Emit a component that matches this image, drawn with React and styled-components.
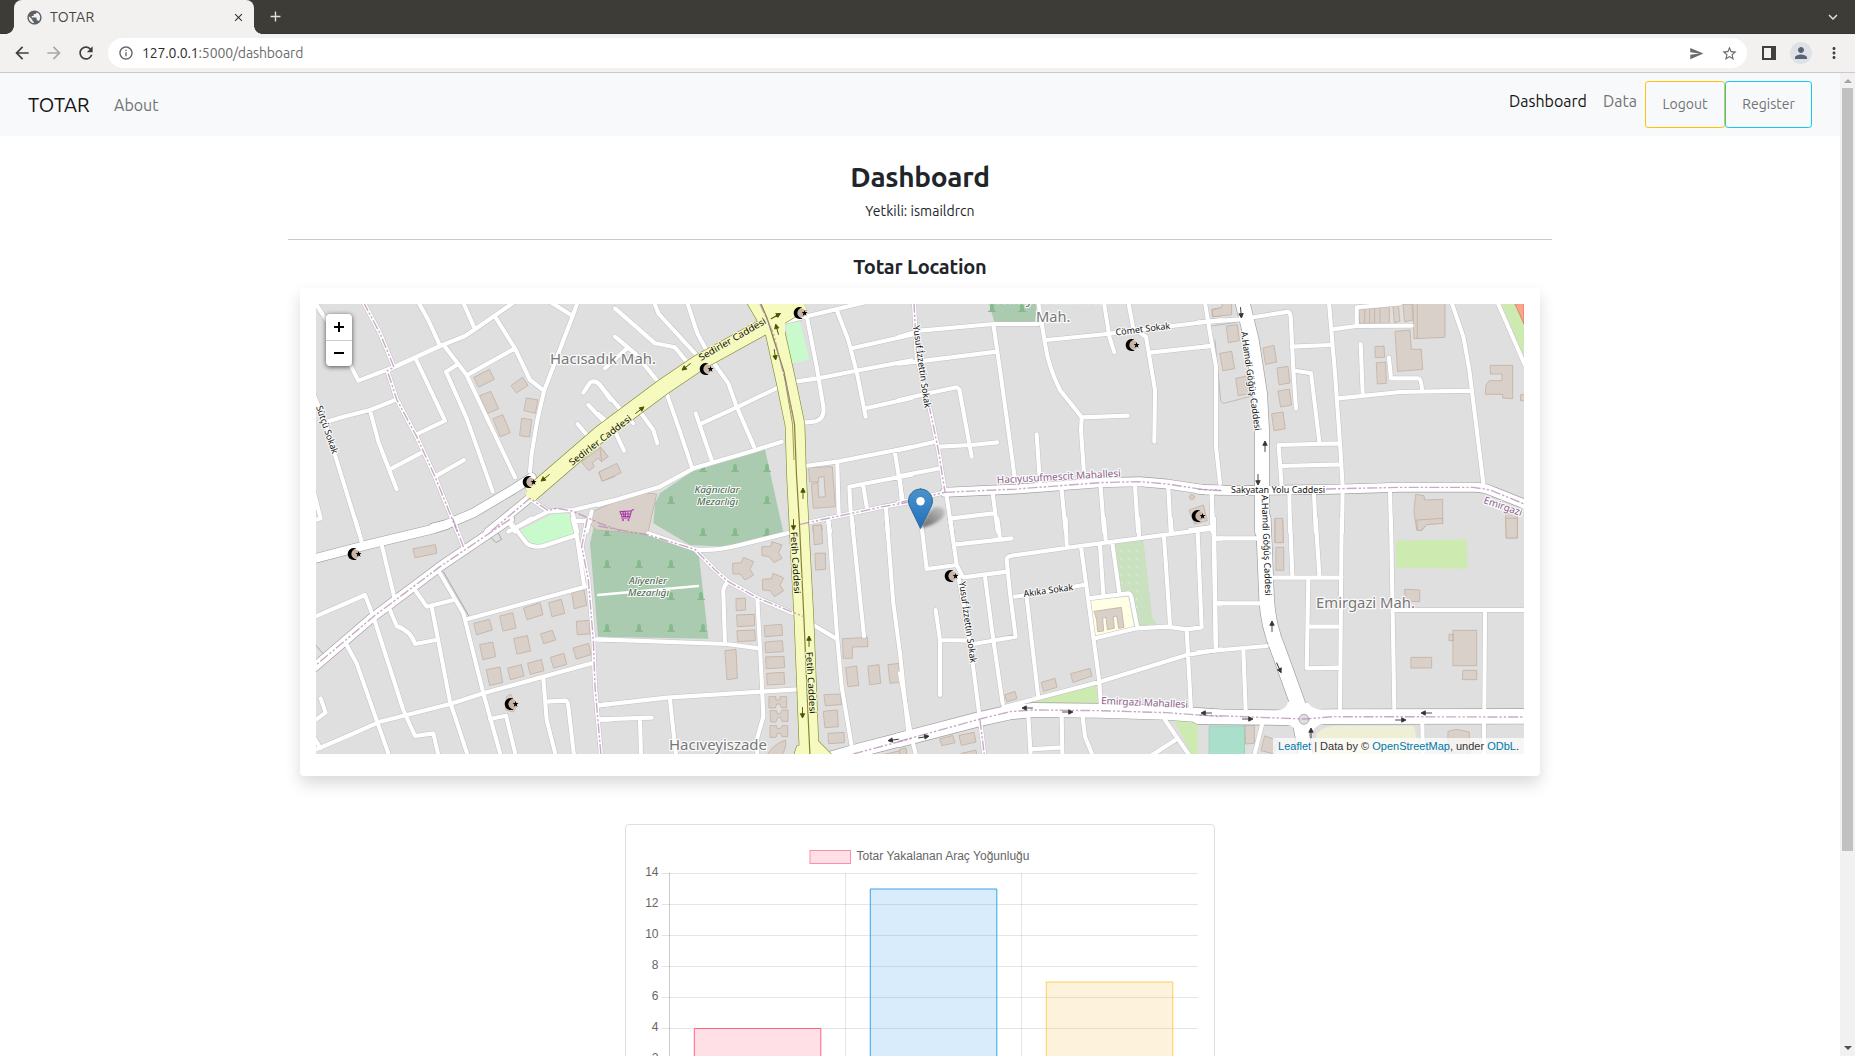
import React from "react";
import styled, { createGlobalStyle } from "styled-components";
import {
  MdArrowBack, MdArrowForward, MdRefresh, MdInfoOutline, MdSend, MdStarBorder,
  MdClose, MdAdd, MdExpandMore, MdMoreVert, MdPerson, MdPublic,
} from "react-icons/md";

const UI = `Ubuntu, "Noto Sans", "Open Sans", sans-serif`;

const Global = createGlobalStyle`
  * { box-sizing: border-box; }
  body { margin: 0; background: #fff; overflow: hidden; font-family: ${UI}; color: #212529; }
  h1, h2, p, hr { margin: 0; }
  a { text-decoration: none; color: inherit; }
`;

/* ---------- browser window ---------- */
const Window = styled.div`height: 100vh; display: flex; flex-direction: column; overflow: hidden;`;
const TabStrip = styled.div`
  height: 34px; flex: none; background: #3e3c37; display: flex; align-items: stretch;
  padding: 0 13px 0 14px; border-bottom: 1px solid #37353a;
`;
const Tab = styled.div`
  width: 240px; height: 34px; background: #f2f1f0; border-radius: 8px 8px 0 0; position: relative;
  display: flex; align-items: center; padding: 0 9px 0 12px; font-size: 14px; color: #454545;
  &::before, &::after {
    content: ""; position: absolute; bottom: 0; width: 8px; height: 8px;
  }
  &::before { left: -8px; background: radial-gradient(circle at 0 0, transparent 7.5px, #f2f1f0 8px); }
  &::after { right: -8px; background: radial-gradient(circle at 100% 0, transparent 7.5px, #f2f1f0 8px); }
  svg { flex: none; }
`;
const TabTitle = styled.span`margin-left: 7px; flex: 1; letter-spacing: 0.3px; line-height: 18px; padding-bottom: 1px;`;
const StripButton = styled.span`
  display: flex; align-items: center; color: #e4dfd4; margin-left: ${(p) => (p.$end ? "auto" : "13px")};
`;
const Toolbar = styled.div`
  height: 39px; flex: none; background: #f2f1f0; border-bottom: 1px solid #cbcaca; display: flex;
  align-items: center; padding: 0 12px 0 12px; color: #3f3f3f;
`;
const NavIcon = styled.span`
  width: 20px; height: 20px; margin-right: 12px; display: flex; align-items: center; justify-content: center;
  color: ${(p) => (p.$off ? "#a9a8a7" : "#3f3f3f")};
`;
const Address = styled.div`
  flex: 1; height: 30px; border-radius: 15px; background: #fff; display: flex; align-items: center;
  padding: 0 9px 0 10px; font-size: 14px; color: #6c6c6c; letter-spacing: -0.13px;
  b { font-weight: 400; color: #2c2c2c; }
  svg { flex: none; }
`;
const Url = styled.span`margin-left: 8px; flex: 1; padding-bottom: 1px;`;
const StarSlot = styled.span`display: flex; margin-left: 17px;`;
const Trailing = styled.div`display: flex; align-items: center; margin-left: 14px; gap: 13px;`;
const Avatar = styled.span`
  width: 22px; height: 22px; border-radius: 50%; background: #dee1e6; color: #5a6275; display: flex;
  align-items: center; justify-content: center;
`;

/* ---------- page ---------- */
const Viewport = styled.div`flex: 1; min-height: 0; display: flex;`;
const Page = styled.div`flex: 1; min-width: 0; overflow: hidden;`;
const ScrollTrack = styled.div`
  width: 15px; background: #f1f1f1; display: flex; flex-direction: column; align-items: center;
  padding: 6px 0 6px;
`;
const ScrollArrow = styled.span`
  border: 4px solid transparent; border-top-width: 0;
  border-bottom: 4px solid ${(p) => (p.$down ? "#505050" : "#a3a3a3")};
  transform: rotate(${(p) => (p.$down ? 180 : 0)}deg); margin-top: ${(p) => (p.$down ? "auto" : 0)};
`;
const ScrollThumb = styled.div`width: 11px; height: 763px; background: #c1c1c1; margin-top: 5px;`;

const Navbar = styled.nav`
  height: 63px; background: #f8f9fb; display: flex; align-items: center; padding: 0 28px;
`;
const Brand = styled.a`font-size: 20px; color: #151515; width: 86px;`;
const NavLink = styled.a`
  font-size: 16px; line-height: 24px; color: ${(p) => (p.$active ? "#151515" : "#727374")};
`;
const NavRight = styled.div`margin-left: auto; height: 47px; display: flex; align-items: flex-start;`;
const LinkSlot = styled.span`width: ${(p) => p.$w}px; padding-top: 8px; margin-left: ${(p) => p.$pull || 0}px;`;
const NavButton = styled.button`
  height: 47px; width: ${(p) => p.$w}px; border: 1px solid ${(p) => p.$color}; border-radius: 3.2px;
  background: transparent; font: 400 14px ${UI}; color: #727374; padding: 0 0 2px;
`;
const Content = styled.main`
  width: 1264px; margin: 0 auto; display: flex; flex-direction: column; align-items: center;
`;
const Title = styled.h1`
  margin-top: 24px; font-size: 28px; line-height: 34px; font-weight: 600; letter-spacing: -0.3px;
`;
const Subtitle = styled.p`margin-top: 7px; font-size: 14px; line-height: 21px; letter-spacing: 0.03px;`;
const Rule = styled.hr`width: 100%; height: 1px; border: 0; background: #c8c9ca; margin-top: 17px;`;
const Section = styled.h2`
  margin-top: 15px; font-size: 20px; line-height: 24px; font-weight: 600; letter-spacing: -0.2px;
`;
const MapCard = styled.section`
  margin-top: 9px; width: 1240px; height: 488px; padding: 16px; background: #fff; border-radius: 4px;
  box-shadow: 0 8px 16px rgba(0, 0, 0, 0.15); flex: none;
`;
const MapFrame = styled.div`position: relative; width: 1208px; height: 450px; overflow: hidden;`;
const MapSvg = styled.svg`display: block; font-family: "Noto Sans", sans-serif;`;
const Zoom = styled.div`
  position: absolute; left: 10px; top: 10px; width: 26px; border-radius: 4px; background: #fff;
  box-shadow: 0 1px 5px rgba(0, 0, 0, 0.65);
`;
const ZoomButton = styled.a`
  display: flex; height: 26px; align-items: center; justify-content: center; color: #000;
  & + & { border-top: 1px solid #ccc; padding-bottom: 2px; }
`;
const Attribution = styled.div`
  position: absolute; right: 0; bottom: 0; padding: 0 5px; height: 16px; background: rgba(255, 255, 255, 0.7);
  font: 11px/16px "Liberation Sans", Arial, sans-serif; color: #333;
  a { color: #0078a8; }
`;
const ChartCard = styled.section`
  margin-top: 48px; width: 590px; padding: 16px; border: 1px solid #dfdfdf; border-radius: 4px; flex: none;
`;
const ChartSvg = styled.svg`display: block; font: 12px "Liberation Sans", Arial, sans-serif;`;

/* ---------- map data ----------
   Each sheet has its own origin on the map and three units per map pixel. */
const SHEETS = {
  A: [300, 290], B: [600, 290], C: [900, 290], D: [1200, 290],
  E: [300, 520], F: [600, 520], G: [900, 520], H: [1200, 520],
};
const sheet = (k) => `translate(${SHEETS[k][0]} ${SHEETS[k][1]}) scale(0.33333)`;

const STREETS = {
  A: `M42 32L85 100L155 232L175 272L290 228L420 168L495 138L525 118L640 38 M355 36L385 90L418 163 M490 38L525 118
    M585 80L645 175L690 270L732 303 M435 170L500 255L645 562 M645 175L505 253 M470 225L438 245L500 385L578 605
    M348 208L435 392L352 432 M80 395L130 380L210 360L290 328 M210 360L235 455L290 598 M275 535L360 490
    M405 560L492 510 M755 38L818 78 M832 38L818 78L732 303L712 390L695 490L690 545 M40 310L80 410L105 495L176 725
    M40 600L62 685L40 692 M850 308L870 278Q885 268 900 285L932 330 M865 345L915 398 M833 402L865 440
    M190 36L240 130L282 232L262 242L290 328L350 440L405 560L472 725 M690 625L745 664L820 660L935 632
    M745 664L625 725 M630 700L645 725 M818 670L832 725 M875 664L860 725 M822 692L870 694`,
  B: `M45 55L165 160L225 172L262 218 M163 38L175 70L285 190 M262 38L292 130L335 210L385 280L408 345L462 470
    M45 140L105 190L178 280 M15 235L78 178 M-5 280L50 345L100 400 M125 372L160 420L172 460 M-5 372L38 410L72 482
    M200 310L245 440L275 530 M287 370L335 510 M305 400L415 350L535 292 M-5 645L180 590L280 535L460 482L545 455
    M540 100L615 80L790 38 M622 88L650 230L670 350Q675 390 640 395L612 398 M585 275L655 265L765 243L935 211
    M710 60L745 150L770 245L797 380 M755 175L935 134 M797 355L935 324 M615 528L710 515L935 471 M712 520L716 670
    M752 665L748 590L850 570L935 554 M790 590L800 650 M885 490L908 630 M600 703L850 650L935 635
    M683 685L690 725 M755 680L760 725 M858 655L863 725`,
  C: `M-5 141L60 122L280 102L415 102 M280 102L300 240L325 420L345 570 M-5 221L75 212L290 185
    M-5 331L85 310L170 292L178 298L215 500 M-5 481L105 455 M118 470L215 465L292 457 M-5 559L120 535 M0 570L5 630
    M415 38L435 160Q445 230 480 300L545 382L543 420L552 550 M545 382L683 377 M440 150L620 132L965 90
    M612 38L628 140L643 187 M685 38L700 115L738 140L765 300L763 455 M750 188L930 168
    M915 38L930 130L948 230L948 470L960 580 M410 433L420 580 M42 38L50 200L90 360L115 480L135 607L100 615L-5 638
    M140 620L156 725 M278 610L293 725 M155 685L280 670 M485 600L497 725 M602 590L612 725 M705 590L714 725
    M805 595L812 725 M935 610L940 725 M870 720L938 712`,
  D: `M-5 97L120 88 M-5 172L35 168 M160 82L262 65Q270 65 272 80L280 240L288 355 M275 170L390 165
    M285 242L333 250L358 455 M387 38L405 250L420 460L428 590 M395 118L470 108L635 107 M470 105L470 52L600 40
    M482 162L488 310 M567 203L573 265L655 265Q664 265 666 300 M415 325L600 306L815 302
    M755 38L790 140L808 240L850 580 M893 38L978 232 M236 465L415 460 M236 465L245 590 M245 528L425 523
    M35 610L37 725 M268 610L270 725 M342 610L347 725 M428 600L426 725 M570 605L573 725`,
  E: `M165 -5L185 65 M245 75L285 240 M40 292L195 225L220 290L310 570L345 648L400 640L415 706 M140 375L170 430L267 706
    M270 270L290 318Q335 335 345 372L408 360 M345 210L380 260L460 240 M395 260L450 545L503 706
    M420 160L490 280L550 520L602 706 M500 298L855 200 M40 692L150 645L240 605L450 552L550 520L875 430
    M40 604L77 578L62 535 M40 650L62 685 M570 597L618 587L647 706 M730 475L740 600L767 706
    M738 545L795 542Q804 542 805 560L822 706 M622 -5L680 70Q700 85 730 78L830 45 M650 22L695 -5 M818 -5L830 45L852 195
    M862 -5L845 80L865 180L880 360L885 500L903 706 M890 358L935 360 M895 556L935 552 M897 600L935 598 M458 -5L492 85`,
  F: `M145 40L285 88L345 150L385 185L475 235L590 284 M285 88Q340 95 420 75L568 38 M385 185Q368 200 370 220L375 370
    M472 235L485 480L490 590L470 660L472 706 M-5 358L380 372L478 385 M-5 556L200 533L485 515L592 508
    M-5 598L155 593 M120 600L123 706 M210 540L228 706 M640 315L712 358 M685 -5L712 358L725 500L757 690
    M755 -5L792 348 M860 -5L880 250L900 400L925 640`,
  G: `M65 20L80 147L170 135 M150 -5L170 135L188 170 M170 73L335 55 M292 -5L300 55 M497 -5L500 75 M612 -5L617 60
    M715 -5L717 50 M812 -5L815 35 M220 372L347 350L330 220L320 120Q318 110 335 107L540 78L942 25 M190 172L320 155
    M255 172L280 360L308 550 M345 230L380 225L550 195 M380 232L414 525 M543 80L598 485L602 550 M600 75L610 225
    M637 70L658 220 M565 235L685 220Q694 222 696 240L712 322 M585 355L710 325L800 320L860 328L905 322L893 38
    M792 50L810 315 M860 328L873 570 M107 270L120 360L120 525 M120 360L220 362 M175 170L205 330L238 585
    M0 460L32 640 M310 562L600 485L860 405L965 388 M385 590L392 706 M485 590L487 706 M390 688L485 682
    M548 590L555 650L578 706 M795 600L868 706 M755 706L830 658 M240 600L253 706 M38 665L48 706 M942 -5L948 390
    M948 57L965 55 M948 250L965 250`,
  H: `M-5 28L40 20 M40 -5L47 382 M47 55L170 55 M47 250L185 250 M-5 396L200 378 M130 390L137 570
    M270 -5L277 165 M347 -5L358 165 M425 -5L420 565 M220 173L425 172 M325 180L320 445L415 443 M330 320L412 320
    M573 -5L583 565 M585 270L978 270 M855 275L853 565 M667 610L669 706 M852 610L853 706 M187 610L163 706`,
};
const AVENUES = [
  ["A", 26, "M400 713L440 703L520 669L640 598L695 562"],
  ["A", 24, "M700 615L600 697L565 725"],
  ["C", 27, "M135 607L350 597L600 578L720 575L800 582L920 600L965 600"],
  ["D", 27, "M-5 598L100 602L400 598L600 592L820 592Q855 592 880 605L978 644"],
  ["D", 42, "M126 32L155 150L180 310L186 420L186 725"],
  ["E", 26, "M40 117L200 75L400 27L440 14"],
  ["E", 26, "M630 -2L420 140L220 290L40 444"],
  ["F", 40, "M680 718L780 690L935 650"],
  ["G", 42, "M-5 661L240 597L330 577L400 570L600 572L800 578L965 590"],
  ["H", 44, "M190 -5L200 240Q205 320 235 390L300 570"],
  ["H", 44, "M-5 590L250 593L400 590L978 589"],
  ["H", 42, "M298 600L318 706"],
];
const BORDERS = [
  ["A", "M190 36L240 130L282 232L262 242L290 328L350 440L405 560L472 725"],
  ["A", "M575 722L690 625L745 662L770 655L820 664L900 700L960 722"],
  ["B", "M480 42L520 130L560 290L583 400"],
  ["B", "M600 703L850 650L935 635"],
  ["C", "M42 38L50 200L90 360L115 480L135 607L100 615L-5 638"],
  ["C", "M135 607L350 597L600 578L720 575L800 582L920 600L965 602"],
  ["D", "M-5 598L60 600 M378 597L600 592L820 592L870 600L978 644"],
  ["E", "M630 -2L420 140L220 290L40 442"],
  ["E", "M862 -5L845 80L865 180L880 360L885 500L903 706"],
  ["E", "M458 -5L492 85"],
  ["F", "M-5 18L145 45L285 88L345 150L385 185L475 235L612 290"],
  ["F", "M760 702L935 655"],
  ["G", "M-5 665L240 597L330 575L400 570L600 572L800 578L965 590"],
  ["G", "M240 600L253 706"],
  ["H", "M-5 585L312 597L400 590L978 591"],
];
const AREAS = [
  ["A", "#c8facc", "M660 722L765 668L808 672L822 740L710 764L690 758Z"],
  ["B", "#c8facc", "M557 100L600 95L628 208L572 222Z"],
  ["B", "#aacbaf", "M165 640L180 610L275 545L495 478L550 727L370 770L270 765L160 700Z"],
  ["F", "#aacbaf", "M-15 5L-30 70L-6 350L325 356L296 100L282 84Z"],
  ["C", "#aacbaf", "M266 38L410 38L405 95L285 102Z"],
  ["D", "#cdebb0", "M903 38L978 38L978 222Z"],
  ["G", "#cdebb0", "M395 548L588 495L593 548Z"],
  ["G", "#cdebb0", "M822 600L893 608L893 706L875 706Z"],
  ["G", "#c9e1bf", "M645 70L730 60L757 295L770 312L715 318L690 215L660 215Z"],
  ["G", "#ffffe5", "M570 240L685 230L702 320L585 348Z"],
  ["H", "#cdebb0", "M587 62L800 58L803 146L589 143Z"],
  ["H", "#eeefd5", "M340 706L350 640Q375 617 410 617L642 617L660 706Z"],
];
const BUILDINGS = {
  A: `M522 262L568 238L583 268L537 291Z M540 317L572 304L596 356L564 370Z M580 386L608 374L631 428L602 440Z
    M634 286L668 262L684 286L650 308Z M680 324L714 330L706 370L673 362Z M666 385L695 389L689 441L660 437Z
    M845 515L902 472L924 500L903 514L895 504L877 518L883 530L868 542Z M897 547L930 532L944 560L908 573Z`,
  B: `M-2 546L50 520L64 548L8 573Z M0 470L24 500L6 514Z M627 533L697 530L706 650L640 655L634 582L654 578L656 622L676 620
    L672 560L655 563L656 575L630 576Z M640 707L665 705L667 722L640 722Z M-16 662L110 606L170 612L143 732L-10 720L-42 690Z`,
  C: `M868 660L910 645L922 692L885 702Z M936 58L962 54L962 78L938 80Z`,
  D: `M38 60L65 52L68 38L95 38L95 74L40 80Z M80 108L112 104L118 152L86 158Z M60 190L95 184L104 236L70 242Z
    M108 265L140 258L148 310L116 317Z M190 174L222 166L230 216L198 223Z M232 234L264 229L270 279L238 284Z
    M235 303L268 297L275 345L243 351Z M216 371L249 366L256 416L223 422Z M478 58L568 50L568 100L480 100Z
    M580 48L595 46L600 94L584 98Z M610 42L636 42L640 90L615 95Z M640 38L735 38L735 142L643 146Z
    M586 124L630 120L634 178L664 178L668 238L594 244Z M526 170L552 168L554 202L527 203Z
    M530 218L557 216L559 280L533 282Z M872 226L938 226L938 326L908 324L908 313L856 313L858 285L868 272L906 272L906 252L872 252Z
    M963 314L980 314L980 332L963 332Z M648 613L672 617L674 630L728 628L728 700L680 702L665 722L650 720L642 665Z
    M226 688L248 688L250 757L226 757Z M918 670L952 672L952 744L920 744Z`,
  E: `M340 86L406 74L410 100L346 113Z M522 310L568 298L577 330L531 344Z M600 288L638 278L648 324L610 333Z
    M672 264L720 248L729 284L682 299Z M747 248L784 238L794 280L757 290Z M816 218L852 209L860 256L824 266Z
    M830 304L868 301L869 342L833 344Z M540 374L578 366L587 410L550 419Z M642 355L682 347L692 393L652 402Z
    M723 341L757 331L767 360L732 371Z M560 449L600 441L608 488L570 496Z M624 444L664 434L672 468L632 479Z
    M684 430L724 418L732 452L692 463Z M752 412L792 400L800 433L762 444Z M820 384L866 370L873 404L830 417Z
    M620 530L632 522L650 560L640 576L618 570Z`,
  F: `M487 80L512 80L516 65L546 75L536 98L546 115L522 128L508 110L487 107Z
    M399 130L424 128L430 112L461 125L450 148L461 165L435 180L420 162L400 162Z
    M489 178L514 176L520 160L551 174L540 196L551 212L524 230L510 212L489 210Z
    M409 236L436 234L437 270L410 272Z M411 285L463 283L464 317L413 320Z M412 332L464 330L466 362L414 365Z
    M494 317L545 313L548 346L496 350Z M496 366L547 362L550 395L498 398Z M498 411L552 409L554 443L500 446Z
    M501 460L552 457L554 492L503 495Z M376 392L408 388L412 475L382 479Z
    M508 530L528 530L528 540L540 540L540 530L560 530L560 563L544 563L540 552L530 552L526 564L508 564Z
    M511 572L530 572L532 582L542 580L546 570L564 570L564 604L546 604L542 592L532 594L528 606L513 606Z
    M511 617L530 617L532 627L542 625L546 617L563 617L563 650L546 650L542 640L532 640L528 652L511 652Z
    M500 706Q520 672 557 660Q560 685 545 706Z M640 17L664 15L668 71L644 74Z M646 100L676 99L677 148L648 150Z
    M729 356L802 352L804 380L757 381L757 415L731 415Z M738 443L770 438L776 496L745 500Z
    M805 438L837 434L842 490L810 494Z M865 434L896 430L903 486L871 490Z M673 524L722 522L724 554L677 557Z
    M671 574L712 570L715 620L676 623Z M685 640L732 637L733 668L687 671Z M840 706L918 688L920 706Z`,
  G: `M120 657L158 646L165 668L127 677Z M178 646L222 637L228 666L185 676Z M185 700L228 690L230 706L185 706Z
    M315 524L345 514L351 536L322 545Z M425 487L465 475L471 502L432 514Z M513 461L570 445L576 468L520 487Z
    M583 274L664 262L672 322L656 325L650 288L640 290L643 325L622 329L618 292L608 294L611 333L593 335L590 300Z
    M0 688L18 684L20 706L0 706Z`,
  H: `M226 -5L248 -5L250 68L226 68Z M229 82L251 82L251 151L229 151Z M652 0L728 -5L728 10L680 14L665 30L653 32Z
    M918 -5L952 -5L952 54L920 54Z M615 208L659 210L659 245L617 243Z M760 331L830 331L830 437L760 437Z
    M748 343L760 343L760 362L748 362Z M634 412L695 412L695 444L634 444Z M790 451L830 451L830 479L788 479Z
    M136 615L163 615L163 670L138 672Z M195 648L235 662L222 702L184 692Z
    M745 634L770 628L808 636L808 706L745 706Z`,
};
const ARROWS = [
  [545, 478, 142], [640, 410, -38], [686, 367, 142], [776, 316, -30], [777, 329, -105], [775, 355, 82],
  [803, 493, -90], [793.5, 525, 90], [809, 641, -90], [802.5, 713, 90], [893, 740, 172], [924, 737, -10],
  [1027, 708, 180], [1068, 712, 0], [1206, 713, 180], [1248, 719, 0], [1426, 713, 180], [1401, 720, 0],
  [1241, 313, 85], [1265, 446, -90], [1258, 480, 90], [1272, 626, -90], [1279, 668, 65], [1311, 733, -90],
];
const MOSQUES = [
  [529, 482], [706, 369], [800, 313], [1132, 345], [1198, 516], [951, 576], [354, 554], [511, 704],
];
const TREES = [
  [703, 468], [735, 468], [767, 468], [671, 500], [767, 500], [703, 532], [735, 532], [767, 532],
  [607, 532], [607, 564], [639, 564], [671, 564], [671, 596], [701, 596],
  [607, 628], [639, 628], [671, 628], [703, 628], [992, 308], [1022, 308],
];
const PLACE = { size: 14.5, fill: "#777", halo: 2.5 };
const STREET = { size: 9.2, fill: "#111", halo: 2.2 };
const BORDER = { size: 10, fill: "#8d618b", halo: 2.5 };
const GRAVE = { size: 9.8, fill: "#456249", halo: 2.2, italic: true };
/* text, style, start x, baseline y, angle, length, halo colour */
const LABELS = [
  ["Hacısadık Mah.", PLACE, 550, 363.5, 0, 106], ["Mah.", PLACE, 1036, 322, 0, 34.5],
  ["Hacıyusufmescit", PLACE, 996, 303, 0, 112],
  ["Hacıveyiszade", PLACE, 669, 750, 0, 98], ["Emirgazi Mah.", PLACE, 1316, 608, 0, 99],
  ["Kağnıcılar", GRAVE, 694.5, 492.5, 0, 45], ["Mezarlığı", GRAVE, 697, 504.5, 0, 41],
  ["Aliyenler", GRAVE, 629, 584, 0, 38], ["Mezarlığı", GRAVE, 628, 596, 0, 41],
  ["Sedirler Caddesi", STREET, 701, 361, -30, 76, "#f7fabf"], ["Sedirler Caddesi", STREET, 572, 466, -37.5, 76, "#f7fabf"],
  ["Fetih Caddesi", STREET, 790.5, 532, 86.5, 62, "#f7fabf"], ["Fetih Caddesi", STREET, 806, 652, 86.5, 62, "#f7fabf"],
  ["Yusuf İzzettin Sokak", STREET, 913, 326, 82, 83], ["Yusuf İzzettin Sokak", STREET, 959, 582, 82, 82],
  ["A.Hamdi Göğüş Caddesi", STREET, 1241, 332, 82, 100], ["A.Hamdi Göğüş Caddesi", STREET, 1261.5, 495, 87.8, 101],
  ["Cömet Sokak", STREET, 1116, 335.5, -7, 55], ["Akıka Sokak", STREET, 1024, 597, -8, 50],
  ["Sakyatan Yolu Caddesi", STREET, 1231, 493, 0, 94],
  ["Hacıyusufmescit Mahallesi", BORDER, 997, 483.5, -3.2, 124], ["Emirgazi Mahallesi", BORDER, 1101, 704, 2.6, 87],
  ["Emirgazi", BORDER, 1483, 503, 19, 40], ["Sütçü Sokak", STREET, 316, 407, 71, 50],
];

const all = (data, props) =>
  Object.entries(data).map(([k, d]) => <path key={k} transform={sheet(k)} d={d} {...props} />);

function StreetMap() {
  return (
    <MapSvg width="1208" height="450" viewBox="316 304 1208 450" fill="none" strokeLinejoin="round" strokeLinecap="round">
      <rect x="316" y="304" width="1208" height="450" fill="#dfdfdf" />
      {AREAS.map(([k, fill, d], i) => <path key={i} transform={sheet(k)} d={d} fill={fill} />)}
      <path d="M1515 304L1524 324V304Z" fill="#f9a58f" stroke="#d9603f" strokeWidth=".6" />
      <rect x="1209.5" y="726" width="35" height="30" fill="#aae0cb" stroke="#86cdb0" strokeWidth=".7" />
      {[0, 1, 2].map((c) => [0, 1, 2, 3, 4, 5, 6, 7, 8].map((r) => (
        <circle key={`${c}-${r}`} cx={1121.5 + c * 8 + (r > 5 ? 7 : 0)} cy={551 + r * 8} r=".8" fill="#e8f4e2"
          opacity={r > 5 && c === 2 ? 0 : 1} />
      )))}
      <g stroke="#a9a9a9" strokeWidth=".7">
        <path transform={sheet("D")} strokeWidth="2" d="M35 108L110 97 M45 150L62 330Q64 342 76 339L155 318" />
        <path transform={sheet("E")} strokeWidth="3" d="M430 155L508 290 M826 52L848 185 M572 52L588 68L605 58L595 40 M48 376L68 400" />
      </g>
      {TREES.map(([x, y], i) => (
        <path key={i} transform={`translate(${x} ${y})`} fill="#86b98c" d="M-4 4V3L-2 2.6V-1Q-2 -4 0 -4Q2 -4 2 -1V2.6L4 3V4Z" />
      ))}
      {all(BUILDINGS, { fill: "#d9d0c9", stroke: "#c3afa0", strokeWidth: 2.4 })}
      <path transform={sheet("D")} stroke="#c3afa0" strokeWidth="2.4"
        d="M494 58V100 M509 56V100 M524 55V100 M540 54V100 M652 42V144" />
      {all(STREETS, { stroke: "#c2c2c2", strokeWidth: 15.5 })}
      {AVENUES.map(([k, w, d], i) => (
        <path key={i} transform={sheet(k)} d={d} stroke="#a0a0a0" strokeWidth={w + 4} />
      ))}
      <path d="M598 595L698 586" stroke="#fff" strokeWidth="2.4" />
      {all(STREETS, { stroke: "#fff", strokeWidth: 12.4 })}
      {AVENUES.map(([k, w, d], i) => <path key={i} transform={sheet(k)} d={d} stroke="#fff" strokeWidth={w} />)}
      <path transform={sheet("H")} fill="#fff" d="M230 572Q262 566 264 545L325 550Q335 567 370 570L370 612Q345 614 335 640L290 640Q285 612 240 612Z" />
      <circle cx="1304" cy="719.3" r="5" fill="#dfdfdf" stroke="#a0a0a0" strokeWidth=".8" />

      <g strokeLinecap="butt">
        {[["#808a2b", 1.2], ["#f7fabf", 0]].map(([c, extra]) => (
          <g key={c} stroke={c}>
            <path strokeWidth={15.5 + extra} strokeLinecap="butt" d="M530 494.5L600 434L663 387L700 362L767 325L803 303" />
            <path strokeWidth={19 + extra} d="M754 296L775 332L787 386L795 425L796.5 475L799 525L804 620L809.5 760" />
            <path strokeWidth={extra} fill="#f7fabf" d="M797 746L794 755L832 755L818 741Z" />
          </g>
        ))}
        <path fill="#f7fabf" d="M751 304H803L785 316V333L768 338L762 325Z" />
        <circle cx="532" cy="495" r="6" fill="#f7fabf" />
        <path stroke="#857f38" strokeWidth="1.2" d="M761 304L767 318L784 372L794.5 424L796.5 475L799.5 525L804 620L808 714L810 756" />
        <path stroke="#8b853f" strokeWidth="1" opacity=".8" d="M784 374L792.5 424L794 460" />
      </g>

      {BORDERS.map(([k, d], i) => (
        <path key={i} transform={sheet(k)} d={d} stroke="#b48fb5" strokeOpacity=".75" strokeWidth="4.2"
          strokeLinecap="butt" strokeDasharray="30 6 7 6 7 6" />
      ))}
      {ARROWS.map(([x, y, r], i) => (
        <path key={i} transform={`translate(${x} ${y}) rotate(${r})`} d="M-5.5 0H3 M1 -2L5 0L1 2Z"
          fill={i < 10 ? "#4a5200" : "#333"} stroke={i < 10 ? "#4a5200" : "#333"} strokeWidth=".9" strokeLinejoin="miter" />
      ))}
      {MOSQUES.map(([x, y], i) => (
        <g key={i} transform={`translate(${x} ${y})`}>
          <circle r="4.6" cx="1" fill="#c8b5a6" />
          <path fill="#000" d="M2.4 -5.3A6 6 0 1 0 2.8 5.2A4.9 4.9 0 1 1 2.4 -5.3Z" />
          <path fill="#000" d="M4.6 -3L5.3 -.9L7.5 -.9L5.8 .5L6.5 2.7L4.6 1.4L2.7 2.7L3.4 .5L1.7 -.9L3.9 -.9Z" />
        </g>
      ))}
      <path stroke="#ac39ac" strokeWidth="1.1" d="M633.5 509.5L631.5 510.5L629.5 518H621.5 M620 511.5L630.5 511 M620 511.5L622 516.5H629.5 M622.8 511.5L624 516 M625.4 511.5V516 M628 511.5V516 M621 514H630" />
      <circle cx="623" cy="520" r="1" fill="#ac39ac" /><circle cx="628.5" cy="520" r="1" fill="#ac39ac" />
      <circle cx="1192" cy="497" r="2.5" fill="#d9d0c9" stroke="#c3afa0" strokeWidth=".8" />

      {LABELS.map(([t, s, x, y, r, len, halo], i) => (
        <text key={i} transform={`translate(${x} ${y}) rotate(${r})`} fontSize={s.size} fill={s.fill} textLength={len}
          lengthAdjust="spacingAndGlyphs" fontStyle={s.italic ? "italic" : "normal"} stroke={halo || "#fff"}
          strokeOpacity={halo ? 1 : 0.85} strokeWidth={s.halo} paintOrder="stroke">{t}</text>
      ))}

      <defs>
        <linearGradient id="pin" x1="0" y1="0" x2="0" y2="1">
          <stop offset="0" stopColor="#4a93cc" /><stop offset="1" stopColor="#2270bd" />
        </linearGradient>
        <linearGradient id="shade" x1="0" y1="1" x2="1" y2="0">
          <stop offset="0" stopColor="#000" stopOpacity=".55" /><stop offset="1" stopColor="#000" stopOpacity=".1" />
        </linearGradient>
        <filter id="soft" x="-50%" y="-50%" width="200%" height="200%"><feGaussianBlur stdDeviation="1.6" /></filter>
      </defs>
      <path d="M921 528C925 518 930 507 938 507C946 507 947 515 940 520C933 525 926 527 921 528Z" fill="url(#shade)" filter="url(#soft)" />
      <path transform="translate(908 488.5)" fill="url(#pin)" stroke="#2e6c97" strokeWidth="1"
        d="M12.5 .5C5.8 .5 .5 5.8 .5 12.4C.5 15 1.5 17.6 2.9 20.2L12.5 40L22.1 20.2C23.5 17.6 24.5 15 24.5 12.4C24.5 5.8 19.2 .5 12.5 .5Z" />
      <circle cx="920.5" cy="501.3" r="4.2" fill="#fff" />
    </MapSvg>
  );
}

/* ---------- chart ---------- */
const BARS = [
  { value: 4, x: 694.3, fill: "rgba(255,99,132,.2)", stroke: "rgb(255,99,132)" },
  { value: 13, x: 870.3, fill: "rgba(54,152,235,.19)", stroke: "rgb(54,162,235)" },
  { value: 7, x: 1046.3, fill: "rgba(245,196,86,.2)", stroke: "rgb(255,206,86)" },
];
const yOf = (v) => 873.5 + (14 - v) * 15.5;

function VehicleChart() {
  return (
    <ChartSvg width="556" height="278" viewBox="642 841 556 278">
      <rect x="810" y="850.5" width="40.5" height="13" fill="#ffe0e6" stroke="#ff8fa6" />
      <text x="856.5" y="860" fill="#666" textLength="173" lengthAdjust="spacing">Totar Yakalanan Araç Yoğunluğu</text>
      {[14, 12, 10, 8, 6, 4, 2, 0].map((v) => (
        <g key={v}>
          <path d={`M661.5 ${Math.floor(yOf(v)) + 0.5}H1198`} stroke="rgba(0,0,0,.1)" />
          <text x="658.5" y={Math.floor(yOf(v)) + 3} textAnchor="end" fill="#666">{v}</text>
        </g>
      ))}
      <path d="M669.5 873V1091" stroke="rgba(0,0,0,.2)" />
      <path d="M845.5 873V1099M1021.5 873V1099" stroke="rgba(0,0,0,.1)" />
      {BARS.map((b) => (
        <g key={b.x}>
          <rect x={b.x} y={yOf(b.value)} width="126.5" height={b.value * 15.5} fill={b.fill} />
          <path d={`M${b.x} ${yOf(0)}V${yOf(b.value)}h126.5V${yOf(0)}`} fill="none" stroke={b.stroke} />
        </g>
      ))}
    </ChartSvg>
  );
}

export default function App() {
  return (
    <Window>
      <Global />
      <TabStrip>
        <Tab>
          <MdPublic size={17} color="#5b6066" />
          <TabTitle>TOTAR</TabTitle>
          <MdClose size={13} color="#333" />
        </Tab>
        <StripButton><MdAdd size={17} /></StripButton>
        <StripButton $end><MdExpandMore size={18} /></StripButton>
      </TabStrip>
      <Toolbar>
        <NavIcon><MdArrowBack size={20} /></NavIcon>
        <NavIcon $off><MdArrowForward size={20} /></NavIcon>
        <NavIcon><MdRefresh size={20} /></NavIcon>
        <Address>
          <MdInfoOutline size={16} color="#5f6368" />
          <Url><b>127.0.0.1</b>:5000/dashboard</Url>
          <MdSend size={15} color="#6b6b6b" />
          <StarSlot><MdStarBorder size={17} color="#6b6b6b" /></StarSlot>
        </Address>
        <Trailing>
          <svg width="16" height="16"><path d="M2 2H14V14H2Z" fill="none" stroke="#3f3f3f" strokeWidth="2" /><path d="M10 2H15V14H10Z" fill="#3f3f3f" /></svg>
          <Avatar><MdPerson size={18} /></Avatar>
          <MdMoreVert size={18} />
        </Trailing>
      </Toolbar>
      <Viewport>
        <Page>
          <Navbar>
            <Brand>TOTAR</Brand>
            <NavLink>About</NavLink>
            <NavRight>
              <LinkSlot $w={95}><NavLink $active>Dashboard</NavLink></LinkSlot>
              <LinkSlot $w={42} $pull={-1}><NavLink>Data</NavLink></LinkSlot>
              <NavButton $w={80} $color="#ffc107">Logout</NavButton>
              <NavButton $w={87} $color="#0dcaf0">Register</NavButton>
            </NavRight>
          </Navbar>
          <Content>
            <Title>Dashboard</Title>
            <Subtitle>Yetkili: ismaildrcn</Subtitle>
            <Rule />
            <Section>Totar Location</Section>
            <MapCard>
              <MapFrame>
                <StreetMap />
                <Zoom>
                  <ZoomButton><svg width="10" height="10"><path d="M5 0V10M0 5H10" stroke="#000" strokeWidth="2" /></svg></ZoomButton>
                  <ZoomButton><svg width="10" height="10"><path d="M0 5H10" stroke="#000" strokeWidth="2" /></svg></ZoomButton>
                </Zoom>
                <Attribution>
                  <a>Leaflet</a> | Data by © <a>OpenStreetMap</a>, under <a>ODbL</a>.
                </Attribution>
              </MapFrame>
            </MapCard>
            <ChartCard><VehicleChart /></ChartCard>
          </Content>
        </Page>
        <ScrollTrack><ScrollArrow /><ScrollThumb /><ScrollArrow $down /></ScrollTrack>
      </Viewport>
    </Window>
  );
}
